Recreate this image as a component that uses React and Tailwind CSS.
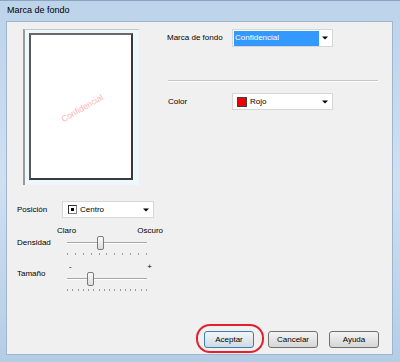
import React from "react";

const font = { fontFamily: '"Liberation Sans", Arial, sans-serif' };

function Arrow() {
  return (
    <svg width="6" height="4" viewBox="0 0 6 4" className="block">
      <path d="M0 0.5 L6 0.5 L3 3.5 Z" fill="#000" />
    </svg>
  );
}

function Ticks({ count, width }) {
  return (
    <div className="flex justify-between" style={{ width }}>
      {Array.from({ length: count }).map((_, i) => (
        <div key={i} className="w-px h-[2px] bg-[#9a9a9a]" />
      ))}
    </div>
  );
}

function Slider({ pos }) {
  return (
    <div className="relative w-[80px] h-[14px]">
      <div className="absolute left-0 right-0 top-[6px] h-[1px] bg-[#a8a8a8]" />
      <div className="absolute left-0 right-0 top-[7px] h-[1px] bg-white" />
      <div
        className="absolute top-0 w-[7px] h-[14px] rounded-[2px] border border-[#7a7a7a] bg-gradient-to-b from-[#fbfbfb] to-[#dcdcdc]"
        style={{ left: pos }}
      />
    </div>
  );
}

function Btn({ children, primary }) {
  return (
    <div
      className={
        "w-[50px] h-[17px] flex items-center justify-center rounded-[3px] border text-[8px] text-black " +
        (primary
          ? "border-[#3c7fb1] bg-gradient-to-b from-[#f2f6f9] to-[#d0dae3]"
          : "border-[#707070] bg-gradient-to-b from-[#f4f4f4] to-[#d6d6d6]")
      }
    >
      {children}
    </div>
  );
}

export default function App() {
  return (
    <div
      style={font}
      className="w-[400px] h-[362px] flex flex-col bg-gradient-to-b from-[#bcd3ea] via-[#cfe0f1] to-[#b4cde6] text-black overflow-hidden"
    >
      <div className="h-[21px] flex items-center pl-[7px] text-[9px] text-black border-t border-[#8aa5c0]">
        Marca de fondo
      </div>
      <div className="flex-1 ml-[6px] mr-[7px] mb-[7px] border border-[#9fb5cb] bg-[#f0f0f0] flex flex-col text-[8px]">
        {/* top section */}
        <div className="flex pt-[7px] pl-[16px]">
          <div className="w-[116px] h-[156px] bg-[#ecf8fb] border-l-2 border-l-[#9a9a9a] border-t border-t-[#c4c8c8] pl-[4px] pr-[6px] pt-[3px] pb-[5px]">
            <div className="w-full h-full bg-white border-2 border-[#3a3a3a] border-t-[#6a6a6a] border-l-[#5a5a5a] flex items-center justify-center overflow-hidden">
              <div className="text-[8.5px] text-[#ffb4b4] -rotate-[30deg] translate-x-[1px] translate-y-[2px]">
                Confidencial
              </div>
            </div>
          </div>
          <div className="ml-[28px] flex flex-col">
            <div className="flex items-center">
              <div className="w-[65px]">Marca de fondo</div>
              <div className="w-[101px] h-[18px] bg-white border border-[#d6d6d6] flex items-center pl-[1px] pr-[4px]">
                <div className="w-[85px] h-[15px] bg-[#3399ff] text-white flex items-center pl-[1px]">
                  Confidencial
                </div>
                <div className="ml-auto">
                  <Arrow />
                </div>
              </div>
            </div>
            <div className="mt-[33px] ml-[1px] w-[210px] h-[1px] bg-[#c4c4c4]" />
            <div className="ml-[1px] w-[210px] h-[1px] bg-white" />
            <div className="flex items-center mt-[11px] ml-[1px]">
              <div className="w-[64px]">Color</div>
              <div className="w-[101px] h-[17px] bg-white border border-[#d6d6d6] flex items-center pl-[4px] pr-[4px]">
                <div className="w-[10px] h-[10px] bg-[#ee0000] border border-[#404040]" />
                <div className="ml-[3px]">Rojo</div>
                <div className="ml-auto">
                  <Arrow />
                </div>
              </div>
            </div>
          </div>
        </div>

        {/* left bottom */}
        <div className="flex items-center mt-[16px] pl-[10px]">
          <div className="w-[45px]">Posición</div>
          <div className="w-[92px] h-[17px] bg-white border border-[#d6d6d6] flex items-center pl-[5px] pr-[4px]">
            <div className="w-[9px] h-[9px] border border-[#303030] border-r-[#808080] border-b-[#808080] flex items-center justify-center">
              <div className="w-[3px] h-[3px] bg-black" />
            </div>
            <div className="ml-[3px]">Centro</div>
            <div className="ml-auto">
              <Arrow />
            </div>
          </div>
        </div>

        <div className="flex justify-between w-[106px] ml-[50px] mt-[8px] h-[10px] leading-[10px]">
          <span>Claro</span>
          <span>Oscuro</span>
        </div>
        <div className="flex items-center pl-[10px]">
          <div className="w-[50px]">Densidad</div>
          <Slider pos={30} />
        </div>
        <div className="ml-[60px] mt-[3px]">
          <Ticks count={11} width={80} />
        </div>

        <div className="flex pl-[10px] mt-[7px]">
          <div className="w-[50px] self-center">Tamaño</div>
          <div className="flex flex-col">
            <div className="flex justify-between w-[85px] pl-[2px] h-[10px] leading-[10px]">
              <span>-</span>
              <span>+</span>
            </div>
            <Slider pos={20} />
          </div>
        </div>
        <div className="ml-[60px] mt-[3px]">
          <Ticks count={16} width={80} />
        </div>

        {/* buttons */}
        <div className="mt-auto flex justify-end pr-[13px] pb-[6px]">
          <div className="relative">
            <Btn primary>Aceptar</Btn>
            <div className="absolute -left-[8px] -right-[10px] -top-[7px] -bottom-[5px] rounded-[14px] border-2 border-[#e3202c]" />
          </div>
          <div className="ml-[14px]">
            <Btn>Cancelar</Btn>
          </div>
          <div className="ml-[11px]">
            <Btn>Ayuda</Btn>
          </div>
        </div>
      </div>
    </div>
  );
}
